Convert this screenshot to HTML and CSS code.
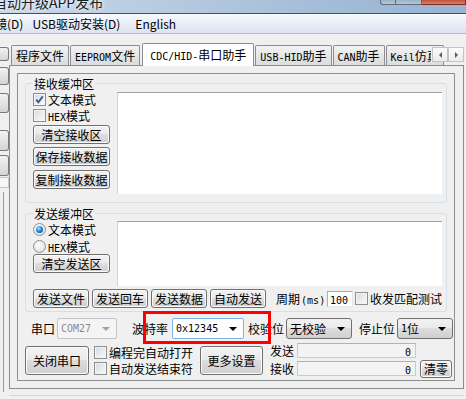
FILE: index.html
```html
<!DOCTYPE html>
<html>
<head>
<meta charset="utf-8">
<link rel="stylesheet" href="styles.css">
</head>
<body>
<div class="titlebar">
  <span class="title">自动升级APP发布</span>
  <div class="capbtns"><span class="cb cb1"></span><span class="cb cb2"></span><span class="cb cb3"></span></div>
</div>
<div class="menubar">
  <span class="mi first">镜(D)</span>
  <span class="mi">USB驱动安装(D)</span>
  <span class="mi">English</span>
</div>
<div class="main">
  <div class="leftstrip">
    <span class="stub s1"></span>
    <span class="stub s2"></span>
    <span class="stub s3"></span>
    <span class="stub s4"></span>
    <span class="stub s5"></span>
    <span class="lbox"></span>
    <span class="lline"></span>
  </div>
  <div class="tabctl">
    <div class="tabrow">
      <span class="tab">程序文件</span>
      <span class="tab"><span class="m">EEPROM</span>文件</span>
      <span class="tab sel"><span class="m">CDC/HID-</span>串口助手</span>
      <span class="tab"><span class="m">USB-HID</span>助手</span>
      <span class="tab"><span class="m">CAN</span>助手</span>
      <span class="tab"><span class="m">Keil</span>仿真</span>
      <div class="scrollbtns">
        <span class="sbtn"><span class="tri-l"></span></span>
        <span class="sbtn"><span class="tri-r"></span></span>
      </div>
    </div>
    <div class="tabpage">
      <div class="panel">
        <div class="grp grp-recv">
          <span class="grp-title">接收缓冲区</span>
          <div class="grp-body">
            <div class="lcol">
              <div class="opt opt-first"><span class="chk"><svg width="11" height="11" viewBox="0 0 11 11"><path d="M2.2 5.6 L4.4 8.2 L8.8 2.4" fill="none" stroke="#3d5a98" stroke-width="1.9"/></svg></span><span class="otext">文本模式</span></div>
              <div class="opt"><span class="chk"></span><span class="otext"><span class="m">HEX</span>模式</span></div>
              <div class="btn lbtn b1">清空接收区</div>
              <div class="btn lbtn b2">保存接收数据</div>
              <div class="btn lbtn b3">复制接收数据</div>
            </div>
            <div class="ta ta-recv"></div>
          </div>
        </div>
        <div class="grp grp-send">
          <span class="grp-title">发送缓冲区</span>
          <div class="grp-body body-send">
            <div class="lcol">
              <div class="opt opt-first2"><span class="rad on"><span class="dot"></span></span><span class="otext">文本模式</span></div>
              <div class="opt opt-second2"><span class="rad"></span><span class="otext"><span class="m">HEX</span>模式</span></div>
              <div class="btn lbtn b4">清空发送区</div>
            </div>
            <div class="ta ta-send"></div>
          </div>
          <div class="sendrow">
            <div class="btn sbtn2">发送文件</div>
            <div class="btn sbtn2">发送回车</div>
            <div class="btn sbtn2">发送数据</div>
            <div class="btn sbtn2">自动发送</div>
            <span class="period">周期<span class="m ms">(ms)</span></span>
            <span class="numbox"><span class="m">100</span></span>
            <span class="chk chk-match"></span>
            <span class="otext">收发匹配测试</span>
          </div>
        </div>
        <div class="serialrow">
          <span class="lbl l-port">串口</span>
          <span class="combo dis c-port"><span class="m">COM27</span><span class="arr"></span></span>
          <span class="lbl l-baud">波特率</span>
          <span class="combo edit c-baud"><span class="m">0x12345</span><span class="arr"></span></span>
          <span class="lbl l-par">校验位</span>
          <span class="combo c-par">无校验<span class="arr"></span></span>
          <span class="lbl l-stop">停止位</span>
          <span class="combo c-stop"><span class="m">1</span>位<span class="arr"></span></span>
        </div>
        <div class="bottomrow">
          <div class="btn bigbtn b-close">关闭串口</div>
          <div class="chkcol">
            <div class="opt"><span class="chk"></span><span class="otext">编程完自动打开</span></div>
            <div class="opt opt-b2"><span class="chk"></span><span class="otext">自动发送结束符</span></div>
          </div>
          <div class="btn bigbtn b-more">更多设置</div>
          <div class="counters">
            <div class="crow"><span class="clbl">发送</span><span class="cfield"><span class="m">0</span></span></div>
            <div class="crow crow2"><span class="clbl">接收</span><span class="cfield"><span class="m">0</span></span><span class="btn clr">清零</span></div>
          </div>
        </div>
      </div>
    </div>
    <div class="bottomline"></div>
  </div>
</div>
<div class="redbox"></div>
</body>
</html>
```
FILE: styles.css
```css
* { box-sizing: border-box; }
html, body { margin: 0; padding: 0; }
body {
  width: 466px;
  height: 399px;
  overflow: hidden;
  background: #f0f0f0;
  font-family: "Noto Sans CJK SC", sans-serif;
  font-size: 12px;
  color: #000;
  position: relative;
}
.m { font-family: "DejaVu Sans Mono", monospace; font-size: 10px; line-height: 1; }

/* title bar */
.titlebar {
  height: 14px;
  border-bottom: 1px solid #3f5268;
  background: linear-gradient(to right, #c9d8e8 0%, #b7cbe0 35%, #a3bcd7 70%, #98b4d2 100%);
  position: relative;
  overflow: hidden;
}
.title {
  display: block;
  margin: -8px 0 0 -7px;
  font-size: 14px;
  line-height: 20px;
  color: #1c1c1c;
  white-space: nowrap;
  text-shadow: 0 0 5px #eef4fa, 0 0 3px #eef4fa;
}
.capbtns { position: absolute; top: 0; right: 0; display: flex; }
.cb { display: block; height: 5px; border: 1px solid #5a6d85; border-top: none; }
.cb1 { width: 16px; background: linear-gradient(#9eb1c7, #b8c7d8); border-radius: 0 0 0 3px; }
.cb2 { width: 26px; background: linear-gradient(#9eb1c7, #b8c7d8); border-left: none; }
.cb3 { width: 44px; background: linear-gradient(#c0503a, #d7826c); border-left: none; border-color: #7a2d20; }

/* menu */
.menubar {
  height: 20px;
  border-bottom: 1px solid #b4bacb;
  background: linear-gradient(#f7f9fc 0%, #e9edf6 50%, #dce3f0 100%);
  display: flex;
  line-height: 19px;
  white-space: nowrap;
}
.mi { margin-right: 15px; }
.mi.first { margin-left: -5px; margin-right: 9px; }

/* main */
.main { display: flex; }
.leftstrip { width: 9px; display: flex; flex-direction: column; padding-top: 13px; }
.stub {
  display: block;
  width: 9px;
  border: 1px solid #7a7a7a;
  border-left: none;
  border-radius: 0 3px 3px 0;
  background: linear-gradient(#f2f2f2, #e4e4e4 50%, #d4d4d4);
}
.s1 { height: 14px; }
.s2 { height: 18px; margin-top: 6px; }
.s3 { height: 20px; margin-top: 8px; }
.s4 { height: 21px; margin-top: 17px; }
.s5 { height: 21px; margin-top: 4px; }
.lbox { display: block; width: 9px; height: 11px; margin-top: 1px; border: 1px solid #c8c8c8; border-left: none; background: #f7f7f7; }
.lline { display: block; width: 4px; height: 200px; margin-top: 4px; border-right: 1px solid #9a9a9a; }

.tabctl { width: 455px; }
.tabrow {
  height: 31px;
  display: flex;
  align-items: flex-end;
  padding-left: 2px;
  position: relative;
  white-space: nowrap;
}
.tab {
  display: block;
  height: 20px;
  padding: 0 4px;
  margin-right: 1px;
  border: 1px solid #898c95;
  border-bottom: none;
  border-radius: 2px 2px 0 0;
  background: linear-gradient(#f3f3f3, #e6e6e6 50%, #dcdcdc);
  line-height: 19px;
  flex: none;
}
.tab.sel {
  height: 23px;
  margin-bottom: -1px;
  margin-left: 1px;
  background: #fff;
  position: relative;
  z-index: 1;
  line-height: 21px;
  padding: 0 7px;
}
.scrollbtns {
  position: absolute;
  right: 0;
  top: 13px;
  display: flex;
  z-index: 2;
  background: #f0f0f0;
  padding-left: 1px;
}
.sbtn {
  display: flex;
  align-items: center;
  justify-content: center;
  width: 16px;
  height: 15px;
  border: 1px solid #c4c4c4;
  background: linear-gradient(#fbfbfb, #ececec);
}
.tri-l { width: 0; height: 0; border-style: solid; border-width: 3px 3px 3px 0; border-color: transparent #4b5d7d transparent transparent; }
.tri-r { width: 0; height: 0; border-style: solid; border-width: 3px 0 3px 3px; border-color: transparent transparent transparent #4b5d7d; }

.tabpage {
  height: 324px;
  border: 1px solid #898c95;
  padding: 7px 8px 7px 7px;
  background: #f0f0f0;
}
.panel {
  height: 308px;
  border: 1px solid #8e8f8f;
}

/* group boxes */
.grp {
  width: 422px;
  margin-left: 7px;
  border: 1px solid #d5dfe5;
  border-radius: 3px;
  padding: 0 4px 8px 7px;
}
.grp-recv { margin-top: 9px; }
.grp-send { margin-top: 10px; padding-bottom: 3px; }
.grp-title {
  display: block;
  width: max-content;
  margin-top: -7px;
  padding: 0 1px;
  background: #f0f0f0;
  line-height: 13px;
}
.grp-body { display: flex; margin-top: 2px; }
.body-send { margin-top: 1px; }
.lcol { width: 77px; margin-right: 7px; display: flex; flex-direction: column; }
.ta { background: #fff; border-top: 1px solid #a3a3a3; border-left: 1px solid #d3d3d3; width: 325px; }
.ta-recv { height: 102px; }
.ta-send { height: 65px; }

.opt { display: flex; align-items: center; height: 13px; line-height: 13px; margin-top: 3px; white-space: nowrap; }
.opt-first { margin-top: 1px; }
.opt-first2 { margin-top: 2px; }
.opt-second2 { margin-top: 4px; }
.otext { margin-left: 2px; line-height: 13px; }
.chk {
  display: inline-flex;
  align-items: center;
  justify-content: center;
  width: 13px;
  height: 13px;
  flex: none;
  border: 1px solid #8e8f8f;
  background: linear-gradient(135deg, #d6d9de, #fbfbfb);
  box-shadow: inset 0 0 0 1px #f4f4f4;
}
.chk svg { display: block; }
.rad {
  display: inline-flex;
  align-items: center;
  justify-content: center;
  width: 13px;
  height: 13px;
  flex: none;
  border-radius: 50%;
  border: 1px solid #8e8f8f;
  background: radial-gradient(circle at 40% 35%, #fdfdfd, #d9dadc);
}
.dot {
  display: block;
  width: 7px;
  height: 7px;
  border-radius: 50%;
  background: radial-gradient(circle at 40% 35%, #b8e6ff 0, #3c9be6 35%, #0d4f9f 80%);
}

.btn {
  border: 1px solid #707070;
  border-radius: 3px;
  background: linear-gradient(#f2f2f2 0%, #ebebeb 45%, #dddddd 50%, #cfcfcf 100%);
  box-shadow: inset 0 0 0 1px #fbfbfb;
  text-align: center;
  white-space: nowrap;
}
.lbtn { height: 19px; line-height: 17px; width: 77px; }
.b1 { margin-top: 3px; }
.b2 { margin-top: 3px; }
.b3 { margin-top: 4px; }
.b4 { margin-top: 1px; }

.sendrow { display: flex; align-items: center; margin-top: 3px; height: 19px; white-space: nowrap; }
.sbtn2 { height: 19px; line-height: 17px; padding: 0 3px; margin-right: 3px; }
.period { margin-left: 7px; line-height: 17px; }
.ms { margin-left: 1px; }
.numbox {
  margin-left: 2px;
  width: 29px;
  height: 16px;
  background: #fff;
  border: 1px solid #abadb3;
  border-right-color: #e3e9ef;
  border-bottom-color: #e3e9ef;
  text-align: right;
  padding-right: 4px;
  line-height: 14px;
}
.chk-match { margin-left: 2px; }

/* serial row */
.serialrow { display: flex; align-items: center; margin-top: 6px; height: 21px; white-space: nowrap; }
.lbl { line-height: 15px; }
.l-port { margin-left: 13px; }
.l-baud { margin-left: 15px; }
.l-par { margin-left: 4px; }
.l-stop { margin-left: 7px; }
.combo {
  display: flex;
  align-items: center;
  height: 21px;
  margin-left: 2px;
  padding-left: 3px;
  position: relative;
  border: 1px solid #707070;
  border-radius: 3px;
  background: linear-gradient(#f2f2f2 0%, #ebebeb 45%, #dddddd 50%, #cfcfcf 100%);
  line-height: 17px;
}
.arr {
  position: absolute;
  right: 6px;
  top: 8px;
  width: 0;
  height: 0;
  border-style: solid;
  border-width: 4px 4px 0 4px;
  border-color: #000 transparent transparent transparent;
}
.combo.dis { background: #f4f4f4; border-color: #c2c4c6; color: #8a8a8a; border-radius: 2px; }
.combo.dis .arr { border-top-color: #a3a3a3; }
.combo.edit { background: #fff; border-color: #7eb4ea; border-radius: 2px; }
.c-port { width: 60px; }
.c-baud { width: 72px; margin-left: 4px; }
.c-par { width: 66px; }
.c-stop { width: 56px; }

/* bottom row */
.bottomrow { display: flex; align-items: flex-start; margin-top: 4px; white-space: nowrap; }
.bigbtn { height: 29px; line-height: 27px; margin-top: 3px; }
.b-close { width: 64px; margin-left: 7px; }
.chkcol { margin-left: 5px; margin-top: 3px; width: 100px; }
.chkcol .opt { margin-top: 0; }
.chkcol .opt-b2 { margin-top: 3px; }
.b-more { width: 63px; margin-left: 6px; }
.counters { margin-left: 7px; }
.crow { display: flex; align-items: center; height: 15px; }
.crow2 { margin-top: 3px; }
.clbl { width: 24px; line-height: 15px; }
.cfield {
  margin-left: 3px;
  width: 119px;
  height: 15px;
  background: #f3f3f3;
  border: 1px solid #c9cbcf;
  border-top-color: #b0b2b6;
  text-align: right;
  padding-right: 4px;
  line-height: 13px;
}
.clr { margin-left: 4px; width: 32px; height: 18px; line-height: 16px; }

.bottomline { margin-top: 6px; border-top: 1px solid #c5dbea; }

/* annotation overlay */
.redbox {
  position: absolute;
  left: 143px;
  top: 311px;
  width: 128px;
  height: 33px;
  border: 3px solid #ff0000;
}
```
